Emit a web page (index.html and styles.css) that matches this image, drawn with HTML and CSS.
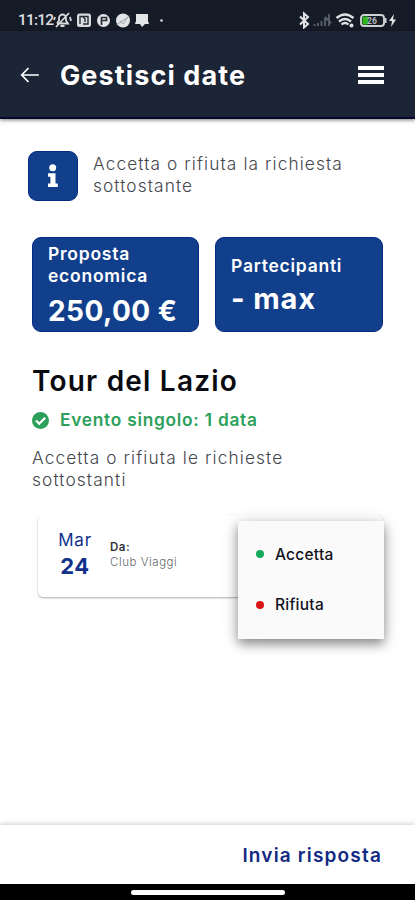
FILE: index.html
```html
<!DOCTYPE html>
<html lang="it">
<head>
<meta charset="utf-8">
<meta name="viewport" content="width=device-width, initial-scale=1">
<title>Gestisci date</title>
<link rel="stylesheet" href="styles.css">
</head>
<body>
<div class="screen">
  <div class="status">
    <span class="clock">11:12</span>
    <svg class="notifications" width="115" height="18" viewBox="0 0 115 18" fill="none">
      <g stroke="#d9dbdd" stroke-width="1.8">
        <path d="M4 12.500h11l-2-3V7a3.500 3.500 0 0 0-7 0v2.500l-2 3M7.500 15h4M16 2L3 16M2 6l-1 3M17 6l1 4"/>
      </g>
      <rect x="24" y="2.500" width="14" height="13.500" rx="2.500" fill="#d9dbdd"/>
      <path d="M27 13V5.500h3l2 2.500v3M30.500 5.500H35V13h-5" stroke="#252c38" stroke-width="1.400"/>
      <circle cx="50.500" cy="9.500" r="6.500" fill="#e3e4e6"/>
      <path d="M48.500 14V6.500h5v3h-4" stroke="#252c38" stroke-width="1.700"/>
      <circle cx="70" cy="9.500" r="7" fill="#e3e4e6"/>
      <path d="M63.500 14L76.500 5M67 10l3 3 5-7" stroke="#a5a9ae" stroke-width="1"/>
      <path d="M83 3h12v10h-3l-3 3-2-3h-4z" fill="#e3e4e6"/>
      <path d="M82 12h14" stroke="#e3e4e6" stroke-width="1.500"/>
      <circle cx="108.500" cy="9.500" r="1.300" fill="#d9dbdd"/>
    </svg>
    <svg class="system" width="102" height="18" viewBox="0 0 102 18" fill="none">
      <path d="M2 5.500l8 7.500-4 3.500V2.500L10 6l-8 7.500" stroke="#e3e4e6" stroke-width="2"/>
      <path d="M16.500 15v-2M20 15v-3M23.500 15v-5M27 15V7M31 15V3M27 6l6 6" stroke="#59616d" stroke-width="1.800"/>
      <g stroke="#dfe1e3" stroke-width="2.300">
        <path d="M38.500 7q8.500-7 17 0M41 10.500q6-5 12 0M43.500 13.500q3.500-3 7 0"/>
      </g>
      <circle cx="53.500" cy="14.500" r="2" fill="#dfe1e3"/>
      <rect x="63" y="4" width="23" height="11" rx="3" stroke="#cfd2d4" stroke-width="1.900"/>
      <path d="M87.500 7v5" stroke="#cfd2d4" stroke-width="2"/>
      <rect x="64.500" y="5.500" width="6" height="8" rx="1" fill="#32b51e"/>
      <text class="battery" x="69" y="12.800">26</text>
      <path d="M96 3l-5 7h3l-1 6 5-7.500h-3z" fill="#e3e4e6"/>
    </svg>
  </div>

  <header class="header">
    <svg class="back" width="20" height="18" viewBox="0 0 20 18" fill="none" stroke="#fff" stroke-width="1.700"><path d="M18.800 9H2M8.500 2L1.700 9l6.800 7"/></svg>
    <h1 class="title">Gestisci date</h1>
    <div class="menu-button"><i></i><i></i><i></i></div>
  </header>

  <main class="content">
    <section class="notice">
      <div class="info">
        <svg width="12" height="24" viewBox="0 0 12 24" fill="#fff"><circle cx="5.700" cy="3.800" r="3.500"/><path d="M1 9.300h7.500v10.200h2.300V23H1v-3.500h2.400v-6.700H1z"/></svg>
      </div>
      <p class="notice-text">Accetta o rifiuta la richiesta<br>sottostante</p>
    </section>

    <section class="stats">
      <div class="stat">
        <div class="label label-economic">Proposta<br>economica</div>
        <div class="value value-price">250,00 €</div>
      </div>
      <div class="stat">
        <div class="label label-people">Partecipanti</div>
        <div class="value value-max">- max</div>
      </div>
    </section>

    <h2 class="tour">Tour del Lazio</h2>
    <div class="event">
      <svg width="17" height="17" viewBox="0 0 17 17"><circle cx="8.500" cy="8.500" r="8.500" fill="#2ca05a"/><path d="M4 8.500l3.200 3.200 6-6" fill="none" stroke="#fff" stroke-width="2.300"/></svg>
      <span>Evento singolo: 1 data</span>
    </div>
    <p class="hint">Accetta o rifiuta le richieste<br>sottostanti</p>

    <section class="request">
      <div class="date"><span class="month">Mar</span><span class="day">24</span></div>
      <div class="from"><b>Da:</b><span>Club Viaggi</span></div>
      <div class="menu">
        <div class="option"><i class="dot accept"></i><span class="accept-text">Accetta</span></div>
        <div class="option"><i class="dot reject"></i><span class="reject-text">Rifiuta</span></div>
      </div>
    </section>
  </main>

  <footer class="footer"><span>Invia risposta</span></footer>
  <div class="navigation"><i></i></div>
</div>
</body>
</html>
```
FILE: styles.css
```css
* { box-sizing: border-box; }
body { margin: 0; font-family: Inter, "Liberation Sans", sans-serif; background: #fff; }
h1, h2, p { margin: 0; }
.screen { width: 415px; height: 900px; display: flex; flex-direction: column; overflow: hidden; white-space: nowrap; }
.status { height: 31px; flex: none; background: #151c28; display: flex; align-items: center; padding: 8px 16px 0 18px; }
.clock { width: 35px; font: 500 15.5px Roboto, sans-serif; letter-spacing: -.8px; color: #dddfe1; }
.system { margin-left: auto; margin-right: -1px; }
.battery { font: 700 8.5px Roboto, sans-serif; fill: #b9bcc0; }
.header { height: 88px; flex: none; background: #1b2536; border-bottom: 2px solid #07082d; box-shadow: 0 1px 4px #0008; display: flex; align-items: center; padding: 2px 31px 0 20px; }
.title { margin-left: 20px; margin-top: 2px; font-size: 27px; font-weight: 700; line-height: 32px; letter-spacing: 1.1px; color: #fff; }
.menu-button { margin-left: auto; width: 26px; display: grid; gap: 3px; }
.menu-button i { height: 4px; background: #fff; }
.content { flex: 1; padding: 32px 32px 0; }
.notice { display: flex; margin-left: -4px; }
.info { width: 50px; height: 50px; border-radius: 9px; background: #123f8c; border: 1px solid #082886; display: flex; align-items: center; justify-content: center; }
.notice-text, .hint { font-size: 17.3px; line-height: 22px; font-weight: 350; color: #44464d; }
.notice-text { margin-left: 15px; margin-top: 2px; letter-spacing: 1.1px; }
.stats { margin-top: 36px; display: grid; grid-template-columns: 167px 168px; gap: 16px; }
.stat { height: 95px; border-radius: 9px; background: #123f8c; border: 1px solid #082886; padding: 2px 15px 0; color: #fff; display: flex; flex-direction: column; justify-content: center; }
.label { font-size: 17.5px; line-height: 22px; font-weight: 600; letter-spacing: .75px; }
.value { font-size: 28px; line-height: 34px; font-weight: 650; letter-spacing: .45px; }
.label-economic { margin-top: -1px; }
.value-price { margin-top: 7px; }
.value-max { font-size: 29px; margin-top: 5px; letter-spacing: .9px; }
.label-people { margin-top: -1px; }
.tour { margin-top: 32px; font-size: 28px; line-height: 34px; font-weight: 600; color: #090b10; letter-spacing: 1.2px; }
.event { margin-top: 11px; display: flex; align-items: center; gap: 11px; font-size: 17.3px; line-height: 22px; font-weight: 600; letter-spacing: .75px; color: #2ca05a; }
.hint { margin-top: 16px; letter-spacing: 1.12px; }
.request { position: relative; margin: 24px 0 0 6px; height: 82px; width: 345px; border-radius: 5px; background: #fff; box-shadow: 0 1px 2px #0005; display: flex; align-items: center; padding-left: 16px; }
.date { width: 42px; display: flex; flex-direction: column; align-items: center; color: #11318b; margin-top: -4px; }
.month { font-size: 17px; line-height: 25px; letter-spacing: .8px; }
.day { font-size: 22px; line-height: 27px; font-weight: 700; letter-spacing: .5px; }
.from { margin: -3px 0 0 14px; display: grid; font-size: 11.5px; line-height: 15px; color: #66686c; letter-spacing: .55px; }
.from b { font-weight: 600; color: #303238; }
.from span { font-weight: 350; }
.menu { position: absolute; left: 200px; top: 6px; width: 146px; height: 118px; background: #fafafa; box-shadow: 0 5px 10px #0006, 0 2px 18px #0002; padding: 8px 18px; }
.option { height: 50.5px; display: flex; align-items: center; gap: 11px; font-size: 15.5px; color: #11131a; font-weight: 500; letter-spacing: .25px; }
.dot { width: 8px; height: 8px; border-radius: 50%; }
.accept { background: #15aa5b; }
.reject { background: #d81515; }
.footer { height: 59px; flex: none; background: #fff; box-shadow: 0 -1px 5px #0003; display: flex; align-items: center; justify-content: flex-end; padding: 2px 33px 0 0; font-size: 19px; font-weight: 600; letter-spacing: 1.18px; color: #122983; }
.navigation { height: 16px; flex: none; background: #000; display: flex; justify-content: center; padding-top: 6px; }
.navigation i { width: 154px; height: 5px; border-radius: 3px; background: #fff; }
```
